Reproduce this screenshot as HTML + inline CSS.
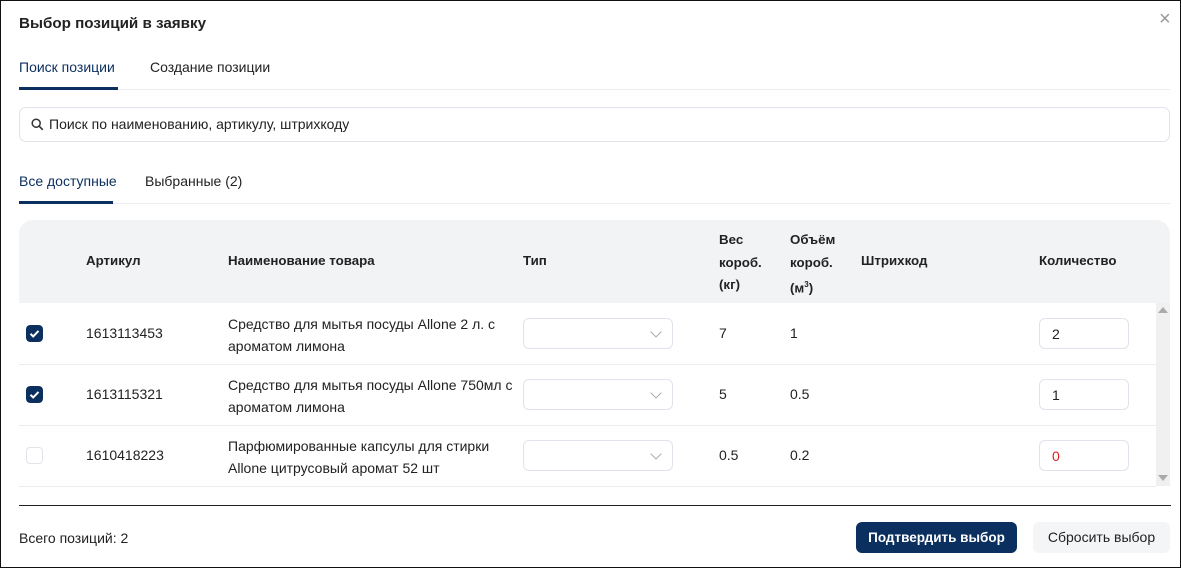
<!DOCTYPE html>
<html><head><meta charset="utf-8"><style>
*{box-sizing:border-box;margin:0;padding:0}
body{width:1181px;height:568px;overflow:hidden;background:#fff;font-family:"Liberation Sans","DejaVu Sans",sans-serif;color:#222;font-size:14px;position:relative}
.frame{position:absolute;left:0;top:0;width:1181px;height:568px;border:1px solid #111}
.a{position:absolute;white-space:nowrap}
.hd{font-weight:bold;font-size:13.3px;color:#222}
.sel{position:absolute;width:150px;height:31px;border:1px solid #e2e2ea;border-radius:6px;left:523px}
.sel:after{content:"";position:absolute;right:12px;top:9px;width:7px;height:7px;border-right:1px solid #aaa;border-bottom:1px solid #aaa;transform:rotate(45deg)}
.qty{position:absolute;left:1039px;width:90px;height:31px;border:1px solid #e2e2ea;border-radius:6px;padding:7px 12px;font-size:14px}
.cb{position:absolute;left:26px;width:17px;height:17px;border-radius:4px}
.row{position:absolute;left:19px;width:1137px;height:1px;background:#ececf0}
</style></head><body>
<div class="frame"></div>
<div class="a" style="left:19px;top:15px;font-size:15.2px;font-weight:bold;color:#222">Выбор позиций в заявку</div>
<div class="a" style="left:1159px;top:8px;font-size:20px;color:#999">×</div>
<div class="a" style="left:19px;top:59px;color:#0b2f5f">Поиск позиции</div>
<div class="a" style="left:150px;top:59px">Создание позиции</div>
<div class="a" style="left:19px;top:89px;width:1151px;height:1px;background:#ececf0"></div>
<div class="a" style="left:19px;top:87px;width:99px;height:3px;background:#0b2f5f"></div>
<div class="a" style="left:19px;top:107px;width:1151px;height:35px;border:1px solid #e2e2ea;border-radius:7px"></div>
<svg class="a" style="left:31px;top:118px" width="13" height="13" viewBox="0 0 13 13"><circle cx="5.2" cy="5.2" r="4" fill="none" stroke="#333" stroke-width="1.5"/><path d="M8.2 8.2L11.8 11.8" stroke="#333" stroke-width="1.6"/></svg>
<div class="a" style="left:49px;top:116px">Поиск по наименованию, артикулу, штрихкоду</div>
<div class="a" style="left:19px;top:173px;color:#0b2f5f">Все доступные</div>
<div class="a" style="left:145px;top:173px">Выбранные (2)</div>
<div class="a" style="left:19px;top:203px;width:1151px;height:1px;background:#ececf0"></div>
<div class="a" style="left:19px;top:201px;width:94px;height:3px;background:#0b2f5f"></div>
<div class="a" style="left:19px;top:220px;width:1151px;height:83px;background:#f2f3f5;border-radius:14px 14px 0 0"></div>
<div class="a hd" style="left:86px;top:253px">Артикул</div>
<div class="a hd" style="left:228px;top:253px">Наименование товара</div>
<div class="a hd" style="left:523px;top:253px">Тип</div>
<div class="a hd" style="left:719px;top:229px;line-height:22.5px">Вес<br>короб.<br>(кг)</div>
<div class="a hd" style="left:790px;top:229px;line-height:22.5px">Объём<br>короб.<br>(м<sup style="font-size:8px">3</sup>)</div>
<div class="a hd" style="left:861px;top:253px">Штрихкод</div>
<div class="a hd" style="left:1039px;top:253px">Количество</div>
<div class="a" style="left:1156px;top:303px;width:14px;height:183px;background:#f0f0f0"></div>
<div class="a" style="left:1158px;top:307px;border:5px solid transparent;border-bottom:6px solid #aaa;border-top:0"></div>
<div class="a" style="left:1158px;top:475px;border:5px solid transparent;border-top:6px solid #aaa;border-bottom:0"></div>
<!-- row1 -->
<svg class="cb" style="top:325px" viewBox="0 0 17 17"><rect width="17" height="17" rx="4" fill="#0b2f5f"/><path d="M4.5 8.8l2.7 2.6 5.3-5.5" fill="none" stroke="#fff" stroke-width="2"/></svg>
<div class="a" style="left:86px;top:325px">1613113453</div>
<div class="a" style="left:228px;top:313px;line-height:22px">Средство для мытья посуды Allone 2 л. с<br>ароматом лимона</div>
<div class="sel" style="top:318px"></div>
<div class="a" style="left:719px;top:325px">7</div>
<div class="a" style="left:790px;top:325px">1</div>
<div class="qty" style="top:318px">2</div>
<div class="row" style="top:364px"></div>
<!-- row2 -->
<svg class="cb" style="top:386px" viewBox="0 0 17 17"><rect width="17" height="17" rx="4" fill="#0b2f5f"/><path d="M4.5 8.8l2.7 2.6 5.3-5.5" fill="none" stroke="#fff" stroke-width="2"/></svg>
<div class="a" style="left:86px;top:386px">1613115321</div>
<div class="a" style="left:228px;top:374px;line-height:22px">Средство для мытья посуды Allone 750мл с<br>ароматом лимона</div>
<div class="sel" style="top:379px"></div>
<div class="a" style="left:719px;top:386px">5</div>
<div class="a" style="left:790px;top:386px">0.5</div>
<div class="qty" style="top:379px">1</div>
<div class="row" style="top:425px"></div>
<!-- row3 -->
<div class="cb" style="top:447px;border:1px solid #e2e2ea"></div>
<div class="a" style="left:86px;top:447px">1610418223</div>
<div class="a" style="left:228px;top:435px;line-height:22px">Парфюмированные капсулы для стирки<br>Allone цитрусовый аромат 52 шт</div>
<div class="sel" style="top:440px"></div>
<div class="a" style="left:719px;top:447px">0.5</div>
<div class="a" style="left:790px;top:447px">0.2</div>
<div class="qty" style="top:440px;color:#e02020">0</div>
<div class="row" style="top:486px"></div>
<div class="a" style="left:19px;top:505px;width:1152px;height:1px;background:#222"></div>
<div class="a" style="left:19px;top:530px">Всего позиций: 2</div>
<div class="a" style="left:856px;top:522px;width:161px;height:31px;background:#0b2f5f;border-radius:6px;color:#fff;font-weight:bold;font-size:13.5px;text-align:center;line-height:31px">Подтвердить выбор</div>
<div class="a" style="left:1033px;top:522px;width:137px;height:31px;background:#f4f5f7;border-radius:6px;text-align:center;line-height:31px">Сбросить выбор</div>
</body></html>
